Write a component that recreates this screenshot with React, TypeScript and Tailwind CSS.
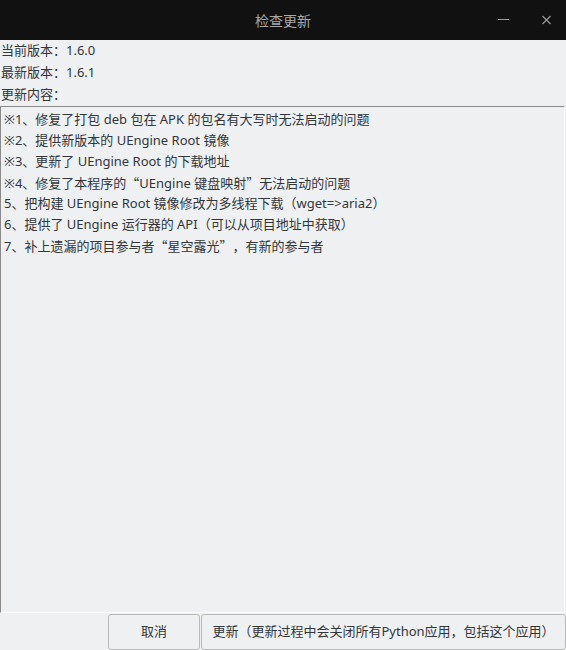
const Q = ({ c }: { c: string }) => (
  <span style={{ fontFamily: '"Noto Sans CJK SC", sans-serif' }}>{c}</span>
);

const lines: React.ReactNode[] = [
  '※1、修复了打包 deb 包在 APK 的包名有大写时无法启动的问题',
  '※2、提供新版本的 UEngine Root 镜像',
  '※3、更新了 UEngine Root 的下载地址',
  <>※4、修复了本程序的<Q c="“" />UEngine 键盘映射<Q c="”" />无法启动的问题</>,
  '5、把构建 UEngine Root 镜像修改为多线程下载（wget=>aria2）',
  '6、提供了 UEngine 运行器的 API（可以从项目地址中获取）',
  <>7、补上遗漏的项目参与者<Q c="“" />星空露光<Q c="”" />，有新的参与者</>,
];

export default function App() {
  return (
    <div
      className="flex h-[650px] w-[566px] flex-col overflow-hidden bg-[#eff0f1] text-[13px] text-[#31363b] [text-spacing-trim:space-all]"
      style={{ fontFamily: '"Noto Sans", "Noto Sans CJK SC", sans-serif' }}
    >
      {/* title bar */}
      <div className="relative flex h-[40px] shrink-0 items-center justify-center bg-[#111111]">
        <span className="text-[14px] text-[#a9a9a9]">检查更新</span>
        <div className="absolute right-0 top-0 flex h-full items-center">
          <svg width="46" height="40" viewBox="0 0 46 40" className="text-[#9a9a9a]">
            <line x1="24" y1="19.5" x2="35" y2="19.5" stroke="currentColor" strokeWidth="1" />
          </svg>
          <svg width="46" height="40" viewBox="0 0 46 40" className="text-[#9a9a9a]">
            <path d="M22.5 16 L30.5 24 M30.5 16 L22.5 24" stroke="currentColor" strokeWidth="1.2" />
          </svg>
        </div>
      </div>

      <div className="flex h-[22px] items-center pl-[1px]">当前版本：1.6.0</div>
      <div className="flex h-[22px] items-center pl-[1px]">最新版本：1.6.1</div>
      <div className="flex h-[22px] items-center pl-[1px]">更新内容：</div>

      {/* changelog */}
      <div className="mr-[1px] flex-1 border-b border-l border-r border-t border-b-white border-l-[#8a8a8a] border-r-white border-t-[#8a8a8a] px-[3px] pt-[2px]">
        {lines.map((l, i) => (
          <div key={i} className="h-[21px] leading-[21px] whitespace-nowrap">
            {l}
          </div>
        ))}
      </div>

      {/* buttons */}
      <div className="flex h-[37px] shrink-0 justify-end pt-[1px]">
        <button className="w-[92px] rounded-[3px] border border-[#b9b9b9] bg-[#eff0f1] text-[#31363b]">
          取消
        </button>
        <button className="ml-[1px] w-[365px] rounded-[3px] border border-[#b9b9b9] bg-[#eff0f1] text-[#31363b]">
          更新（更新过程中会关闭所有Python应用，包括这个应用）
        </button>
      </div>
    </div>
  );
}
